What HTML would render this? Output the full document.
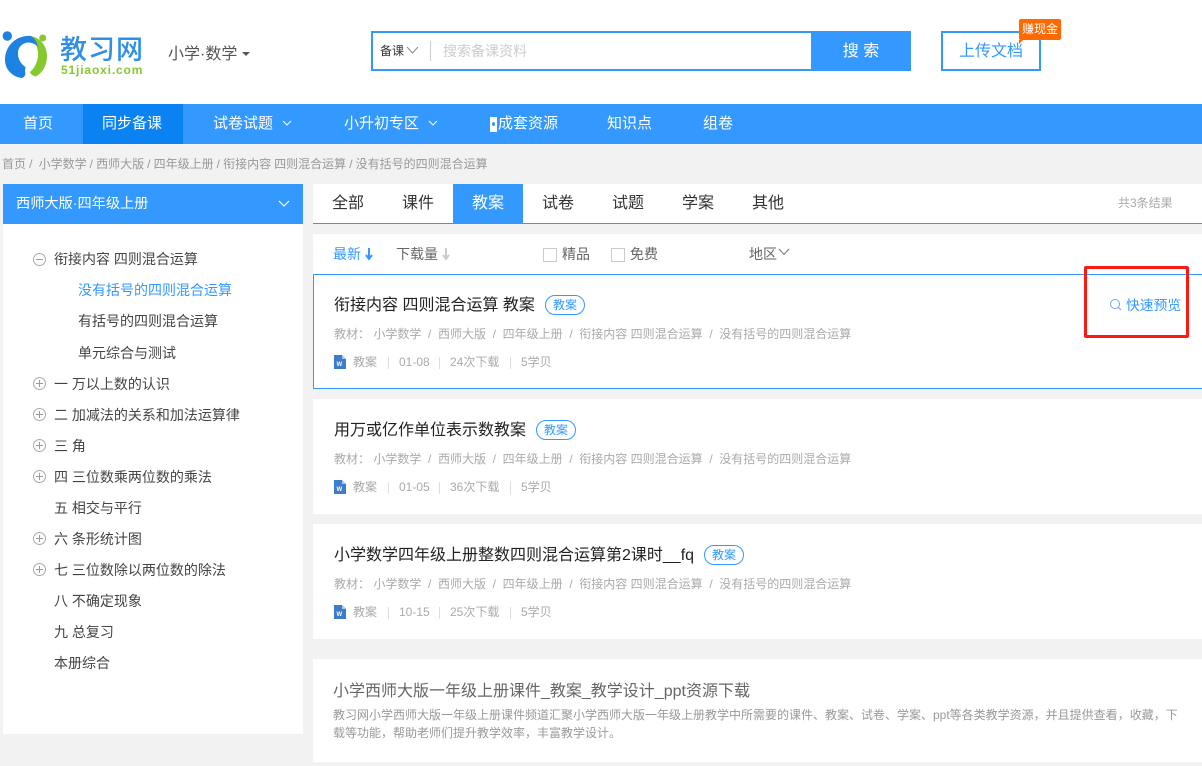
<!DOCTYPE html>
<html lang="zh"><head><meta charset="utf-8"><title>教习网</title>
<style>
html,body{margin:0;padding:0}
body{width:1202px;height:766px;position:relative;overflow:hidden;background:#f2f2f2;font-family:"Liberation Sans","Noto Sans CJK SC",sans-serif;color:#333}
.a,.t{position:absolute;white-space:nowrap}
.t{line-height:20px}
.n{color:#fff;font-size:15px;top:114px}
.tab{font-size:16px;top:194px;color:#333}
.tree{font-size:14px;color:#444}
.ic{position:absolute;left:33px;width:11px;height:11px;border:1px solid #aaa;border-radius:50%}
.ic:before{content:"";position:absolute;left:2px;right:2px;top:5px;height:1px;background:#999}
.ic.p:after{content:"";position:absolute;top:2px;bottom:2px;left:5px;width:1px;background:#999}
.card{position:absolute;left:313px;width:889px;background:#fff}
.title{font-size:16px;color:#222}
.badge{position:absolute;height:18px;line-height:18px;width:38px;border:1px solid #3399ff;border-radius:10px;color:#3399ff;font-size:12px;text-align:center}
.meta{font-size:12px;color:#aaa}
.meta i{font-style:normal;margin-right:3.3px}
.sep{position:absolute;width:1px;height:12px;background:#ddd}
.f{font-size:14px;color:#666;top:244px}
</style></head><body>
<div class="a" style="left:0;top:0;width:1202px;height:104px;background:#fff"></div>

<svg class="a" style="left:0;top:0" width="56" height="82" viewBox="0 0 56 82">
<circle cx="7.300" cy="36" r="4.700" fill="#1e82e0"/><circle cx="42.700" cy="38" r="3.500" fill="#85c92e"/>
<path d="M28 36C40 36 47 46 47 56C47 66 42 73 36 76.500C33 76 30.500 74 30 72L33 69C36 65 38.500 59 38 52C37 45 34 38 28 36Z" fill="#85c92e"/>
<path d="M31 36C16 35 5 46 5 60C5 69 12 77 22 78C25 77 26 74 25 71L25.500 67C20.500 64 17.500 58 18 52C18.500 46 24 42 29.500 42.500C33 43 36 44.500 38 47C37 42 34.500 38 31 36Z" fill="#1e82e0"/>
</svg>
<div class="t" style="left:60px;top:34px;font-size:27px;line-height:32px;color:#2f8fe6;font-weight:500;letter-spacing:1px">教习网</div>
<div class="t" style="left:61px;top:62px;font-size:12px;line-height:16px;color:#85c92e;font-weight:bold;letter-spacing:.85px">51jiaoxi.com</div>
<div class="t" style="left:168px;top:45px;font-size:16px;color:#555">小学·数学</div>
<div class="a" style="left:242px;top:52px;border:4px solid transparent;border-top:4px solid #555"></div>

<div class="a" style="left:371px;top:31px;width:438px;height:36px;border:2px solid #3399ff;background:#fff"></div>
<div class="t" style="left:380px;top:41px;font-size:12px;color:#333">备课</div>
<svg class="a" style="left:406px;top:46px" width="13" height="9"><path d="M1 1L6.500 7L12 1" fill="none" stroke="#888"/></svg>
<div class="a" style="left:430px;top:41px;width:1px;height:20px;background:#ccc"></div>
<div class="t" style="left:443px;top:41px;font-size:14px;color:#ccc">搜索备课资料</div>
<div class="t" style="left:811px;top:31px;width:100px;height:40px;line-height:41px;background:#3399ff;color:#fff;text-align:center;font-size:16px">搜 索</div>
<div class="t" style="left:941px;top:31px;width:96px;height:36px;line-height:38px;border:2px solid #3399ff;color:#3399ff;text-align:center;font-size:16px;background:#fff">上传文档</div>
<div class="t" style="left:1019px;top:19px;width:42px;height:21px;line-height:20px;background:#ff6a00;color:#fff;text-align:center;font-size:12px;border-radius:2px">赚现金</div>
<div class="a" style="left:1019px;top:40px;border-top:4px solid #ff6a00;border-right:4px solid transparent"></div>

<div class="a" style="left:0;top:104px;width:1202px;height:40px;background:#3399ff"></div>
<div class="a" style="left:83px;top:104px;width:100px;height:40px;background:#0a82f2"></div>
<div class="t n" style="left:23px">首页</div>
<div class="t n" style="left:102px">同步备课</div>
<div class="t n" style="left:213px">试卷试题</div>
<svg class="a" style="left:282px;top:120px" width="10" height="7"><path d="M1 1L5 5L9 1" fill="none" stroke="#fff"/></svg>
<div class="t n" style="left:344px">小升初专区</div>
<svg class="a" style="left:428px;top:120px" width="10" height="7"><path d="M1 1L5 5L9 1" fill="none" stroke="#fff"/></svg>
<div class="a" style="left:490px;top:117px;width:7px;height:15px;background:#fff"></div>
<div class="a" style="left:492px;top:122px;width:3px;height:4px;background:#3399ff;border-radius:50%"></div>
<div class="t n" style="left:498px">成套资源</div>
<div class="t n" style="left:607px">知识点</div>
<div class="t n" style="left:703px">组卷</div>

<div class="t" style="left:2px;top:154px;font-size:12px;color:#999;word-spacing:-.25px">首页 / &nbsp;小学数学 / 西师大版 / 四年级上册 / 衔接内容 四则混合运算 / 没有括号的四则混合运算</div>

<div class="a" style="left:3px;top:184px;width:300px;height:550px;background:#fff"></div>
<div class="a" style="left:3px;top:184px;width:300px;height:40px;background:#3399ff"></div>
<div class="t" style="left:16px;top:194px;font-size:14.200px;color:#fff">西师大版·四年级上册</div>
<svg class="a" style="left:278px;top:200px" width="12" height="8"><path d="M1 1L6 6L11 1" fill="none" stroke="#fff" stroke-width="1.200"/></svg>

<div class="ic" style="top:253px"></div><div class="t tree" style="left:54px;top:249px">衔接内容 四则混合运算</div>
<div class="t tree" style="left:78px;top:280px;color:#3399ff">没有括号的四则混合运算</div>
<div class="t tree" style="left:78px;top:311px">有括号的四则混合运算</div>
<div class="t tree" style="left:78px;top:343px">单元综合与测试</div>
<div class="ic p" style="top:377px"></div><div class="t tree" style="left:54px;top:374px">一 万以上数的认识</div>
<div class="ic p" style="top:408px"></div><div class="t tree" style="left:54px;top:405px">二 加减法的关系和加法运算律</div>
<div class="ic p" style="top:439px"></div><div class="t tree" style="left:54px;top:436px">三 角</div>
<div class="ic p" style="top:470px"></div><div class="t tree" style="left:54px;top:467px">四 三位数乘两位数的乘法</div>
<div class="t tree" style="left:54px;top:498px">五 相交与平行</div>
<div class="ic p" style="top:532px"></div><div class="t tree" style="left:54px;top:529px">六 条形统计图</div>
<div class="ic p" style="top:563px"></div><div class="t tree" style="left:54px;top:560px">七 三位数除以两位数的除法</div>
<div class="t tree" style="left:54px;top:591px">八 不确定现象</div>
<div class="t tree" style="left:54px;top:622px">九 总复习</div>
<div class="t tree" style="left:54px;top:653px">本册综合</div>

<div class="card" style="top:184px;height:39px;border-bottom:1px solid #3399ff"></div>
<div class="a" style="left:453px;top:184px;width:70px;height:40px;background:#3399ff"></div>
<div class="t tab" style="left:332px">全部</div>
<div class="t tab" style="left:402px">课件</div>
<div class="t tab" style="left:472px;color:#fff">教案</div>
<div class="t tab" style="left:542px">试卷</div>
<div class="t tab" style="left:612px">试题</div>
<div class="t tab" style="left:682px">学案</div>
<div class="t tab" style="left:752px">其他</div>
<div class="t" style="left:1118px;top:193px;font-size:12px;color:#aaa">共3条结果</div>

<div class="card" style="top:234px;height:40px"></div>
<div class="t f" style="left:333px;color:#3399ff">最新</div>
<svg class="a" style="left:364px;top:247px" width="10" height="14"><path d="M5 1V11M2 8L5 12L8 8" fill="none" stroke="#3399ff" stroke-width="2"/></svg>
<div class="t f" style="left:396px">下载量</div>
<svg class="a" style="left:441px;top:247px" width="10" height="14"><path d="M5 1V11M2 8L5 12L8 8" fill="none" stroke="#ccc" stroke-width="2"/></svg>
<div class="a" style="left:543px;top:248px;width:12px;height:12px;border:1px solid #ccc"></div>
<div class="t f" style="left:562px">精品</div>
<div class="a" style="left:611px;top:248px;width:12px;height:12px;border:1px solid #ccc"></div>
<div class="t f" style="left:630px">免费</div>
<div class="t f" style="left:749px">地区</div>
<svg class="a" style="left:778px;top:248px" width="12" height="8"><path d="M1 1L6 6.500L11 1" fill="none" stroke="#777"/></svg>

<div class="card" style="top:274px;height:113px;border:1px solid #3399ff;border-right:0;box-sizing:content-box;width:888px"></div>
<div class="t title" style="left:334px;top:296px">衔接内容 四则混合运算 教案</div>
<div class="badge" style="left:545px;top:295px">教案</div>
<div class="t meta" style="left:334px;top:324px">教材： 小学数学 &nbsp;<i>/</i> 西师大版 &nbsp;<i>/</i> 四年级上册 &nbsp;<i>/</i> 衔接内容 四则混合运算 &nbsp;<i>/</i> 没有括号的四则混合运算</div>
<svg class="a" style="left:334px;top:355px" width="12" height="14"><path d="M0 0H8L12 4V14H0Z" fill="#3d7cc9"/><path d="M8 0L12 4H8Z" fill="#a9c6ea"/><text x="2.500" y="11" font-size="6" font-weight="bold" fill="#fff" font-family="Liberation Sans">W</text></svg>
<div class="t meta" style="left:353px;top:352px">教案</div><div class="sep" style="left:388px;top:357px"></div>
<div class="t meta" style="left:399px;top:352px">01-08</div><div class="sep" style="left:439px;top:357px"></div>
<div class="t meta" style="left:450px;top:352px">24次下载</div><div class="sep" style="left:510px;top:357px"></div>
<div class="t meta" style="left:521px;top:352px">5学贝</div>

<svg class="a" style="left:1109px;top:298px" width="14" height="14"><circle cx="6" cy="6" r="4.500" fill="none" stroke="#6aa9ef"/><path d="M9.500 9.500L12 12" stroke="#6aa9ef"/></svg>
<div class="t" style="left:1126px;top:296px;font-size:13.800px;color:#3399ff">快速预览</div>
<div class="a" style="left:1084px;top:266px;width:99px;height:66px;border:3px solid #fb1a12;border-radius:2px"></div>

<div class="card" style="top:399px;height:115px"></div>
<div class="t title" style="left:334px;top:421px">用万或亿作单位表示数教案</div>
<div class="badge" style="left:536px;top:420px">教案</div>
<div class="t meta" style="left:334px;top:449px">教材： 小学数学 &nbsp;<i>/</i> 西师大版 &nbsp;<i>/</i> 四年级上册 &nbsp;<i>/</i> 衔接内容 四则混合运算 &nbsp;<i>/</i> 没有括号的四则混合运算</div>
<svg class="a" style="left:334px;top:480px" width="12" height="14"><path d="M0 0H8L12 4V14H0Z" fill="#3d7cc9"/><path d="M8 0L12 4H8Z" fill="#a9c6ea"/><text x="2.500" y="11" font-size="6" font-weight="bold" fill="#fff" font-family="Liberation Sans">W</text></svg>
<div class="t meta" style="left:353px;top:477px">教案</div><div class="sep" style="left:388px;top:482px"></div>
<div class="t meta" style="left:399px;top:477px">01-05</div><div class="sep" style="left:439px;top:482px"></div>
<div class="t meta" style="left:450px;top:477px">36次下载</div><div class="sep" style="left:510px;top:482px"></div>
<div class="t meta" style="left:521px;top:477px">5学贝</div>

<div class="card" style="top:524px;height:115px"></div>
<div class="t title" style="left:334px;top:546px">小学数学四年级上册整数四则混合运算第2课时__fq</div>
<div class="badge" style="left:704px;top:545px">教案</div>
<div class="t meta" style="left:334px;top:574px">教材： 小学数学 &nbsp;<i>/</i> 西师大版 &nbsp;<i>/</i> 四年级上册 &nbsp;<i>/</i> 衔接内容 四则混合运算 &nbsp;<i>/</i> 没有括号的四则混合运算</div>
<svg class="a" style="left:334px;top:605px" width="12" height="14"><path d="M0 0H8L12 4V14H0Z" fill="#3d7cc9"/><path d="M8 0L12 4H8Z" fill="#a9c6ea"/><text x="2.500" y="11" font-size="6" font-weight="bold" fill="#fff" font-family="Liberation Sans">W</text></svg>
<div class="t meta" style="left:353px;top:602px">教案</div><div class="sep" style="left:388px;top:607px"></div>
<div class="t meta" style="left:399px;top:602px">10-15</div><div class="sep" style="left:439px;top:607px"></div>
<div class="t meta" style="left:450px;top:602px">25次下载</div><div class="sep" style="left:510px;top:607px"></div>
<div class="t meta" style="left:521px;top:602px">5学贝</div>

<div class="card" style="top:659px;height:103px"></div>
<div class="t" style="left:333px;top:682px;font-size:16px;color:#666">小学西师大版一年级上册课件_教案_教学设计_ppt资源下载</div>
<div class="a" style="left:333px;top:706px;width:850px;font-size:12px;line-height:18px;color:#999;white-space:normal">教习网小学西师大版一年级上册课件频道汇聚小学西师大版一年级上册教学中所需要的课件、教案、试卷、学案、ppt等各类教学资源，并且提供查看，收藏，下载等功能，帮助老师们提升教学效率，丰富教学设计。</div>
</body></html>
